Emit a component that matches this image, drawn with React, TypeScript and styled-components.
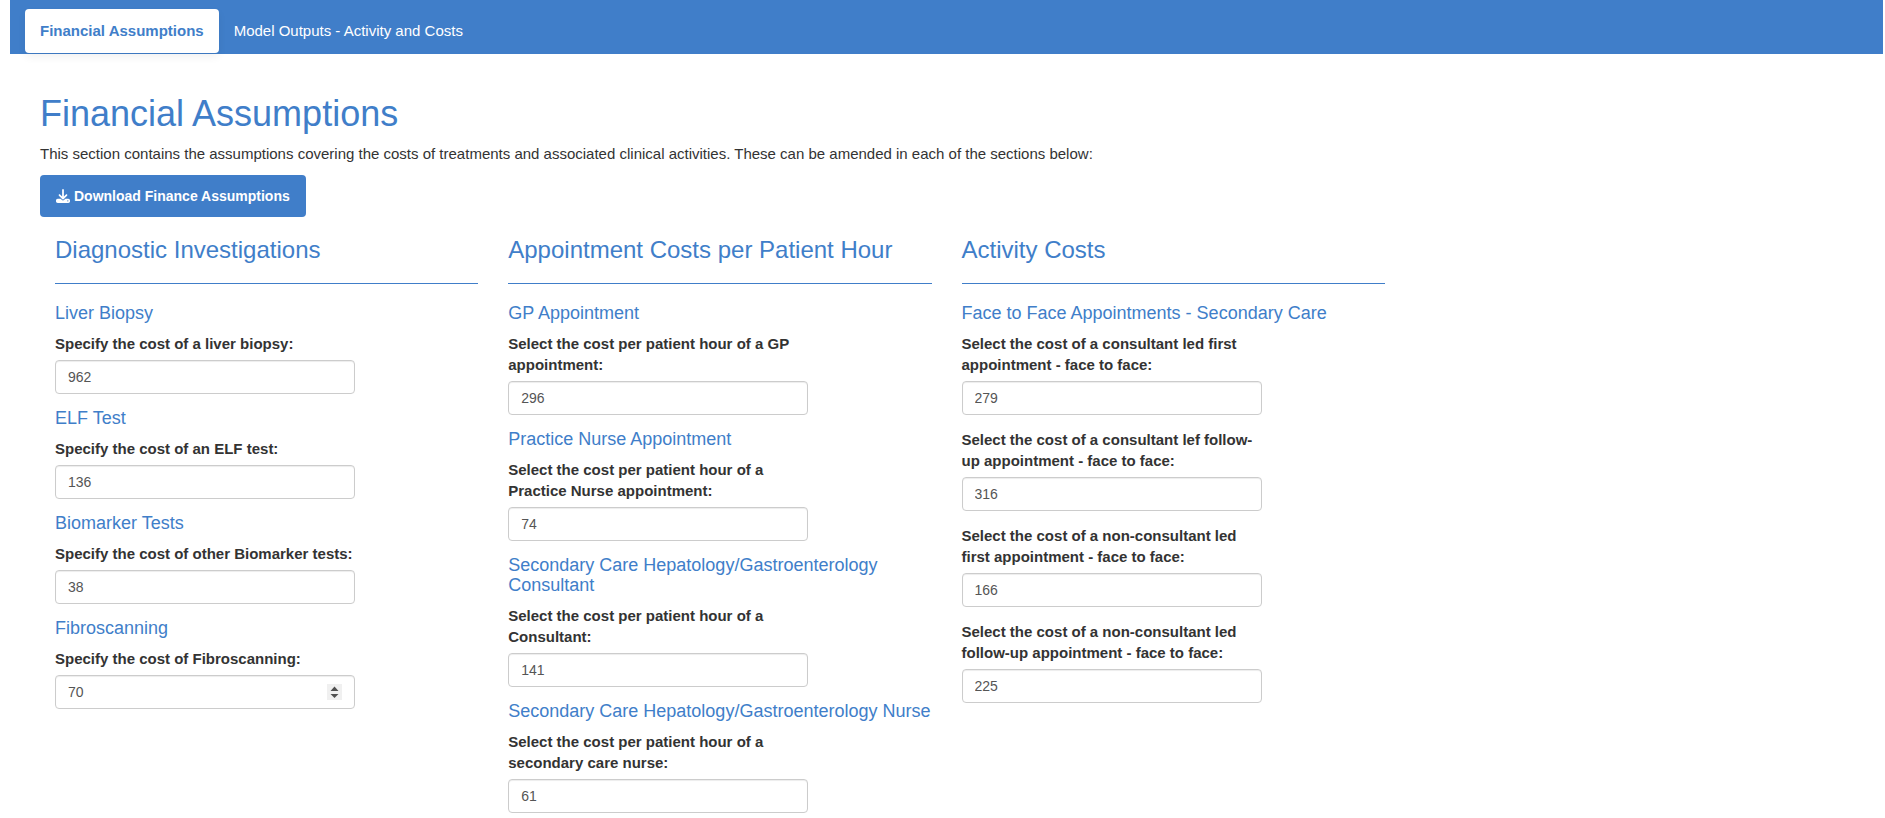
import React, { useId, useState } from 'react';
import styled, { createGlobalStyle } from 'styled-components';
import { FaDownload } from 'react-icons/fa6';

const blue = '#407ec9';

const spinnerArrows =
  "data:image/svg+xml,%3Csvg xmlns='http://www.w3.org/2000/svg' width='15' height='16'%3E%3Cpath fill='%23505050' d='M7.500 2.500L11.500 7H3.500zM7.500 14L3.500 10H11.500z'/%3E%3C/svg%3E";

const GlobalStyle = createGlobalStyle`
  * { box-sizing: border-box; }
  body {
    margin: 0;
    background: #fff;
    color: #333;
    font-family: 'Liberation Sans', Arial, sans-serif;
    font-size: 15px;
    line-height: 21px;
  }
`;

const Page = styled.div`
  padding: 0 2px 0 10px;
`;

const TabBar = styled.nav`
  display: flex;
  height: 54px;
  padding: 9px 15px 1px;
  background: ${blue};
`;

const Tab = styled.a<{ $active?: boolean }>`
  display: flex;
  align-items: center;
  padding: 0 15px 2px;
  border-radius: 4px;
  text-decoration: none;
  font-weight: ${(p) => (p.$active ? 700 : 400)};
  color: ${(p) => (p.$active ? blue : '#fff')};
  background: ${(p) => (p.$active ? '#fff' : 'transparent')};
  box-shadow: ${(p) => (p.$active ? '0 4px 8px rgba(0, 0, 0, 0.06)' : 'none')};
`;

const Content = styled.main`
  padding: 40px 30px 0;
`;

const PageTitle = styled.h1`
  margin: 0 0 9px;
  color: ${blue};
  font-size: 36px;
  font-weight: 400;
  line-height: 40px;
`;

const Intro = styled.p`
  margin: 0 0 11px;
`;

const DownloadButton = styled.button`
  display: flex;
  align-items: center;
  gap: 4px;
  height: 42px;
  padding: 0 16px;
  border: 0;
  border-radius: 4px;
  background: ${blue};
  color: #fff;
  font-family: inherit;
  font-size: 14px;
  font-weight: 700;
  cursor: pointer;
`;

const Columns = styled.div`
  display: grid;
  grid-template-columns: repeat(3, 25%);
`;

const Column = styled.section`
  padding: 0 15px;
`;

const ColumnTitle = styled.h3`
  margin: 20px 0 19px;
  padding-bottom: 20px;
  border-bottom: 1px solid ${blue};
  color: ${blue};
  font-size: 24px;
  font-weight: 400;
  line-height: 26px;
`;

const GroupTitle = styled.h4`
  margin: 10px 0;
  color: ${blue};
  font-size: 18px;
  font-weight: 400;
  line-height: 20px;
`;

const Field = styled.div`
  width: 300px;
  max-width: 100%;
  margin-bottom: 14px;
`;

const Label = styled.label`
  display: block;
  margin-bottom: 6px;
  font-weight: 700;
`;

const NumberInput = styled.input<{ $spinner?: boolean }>`
  display: block;
  width: 100%;
  height: 34px;
  padding: 6px 12px;
  border: 1px solid #ccc;
  border-radius: 4px;
  background: #fff;
  box-shadow: inset 0 1px 1px rgba(0, 0, 0, 0.075);
  color: #555;
  font-family: inherit;
  font-size: 14px;

  &::-webkit-inner-spin-button {
    appearance: none;
    width: 15px;
    height: 16px;
    background: #f0f0f0 url("${spinnerArrows}") no-repeat;
    opacity: ${(p) => (p.$spinner ? 1 : 0)};
  }

  &:hover::-webkit-inner-spin-button {
    opacity: 1;
  }
`;

type FieldData = { label: string; value: number; spinner?: boolean };
type Group = { title: string; fields: FieldData[] };

const columns: { title: string; groups: Group[] }[] = [
  {
    title: 'Diagnostic Investigations',
    groups: [
      { title: 'Liver Biopsy', fields: [{ label: 'Specify the cost of a liver biopsy:', value: 962 }] },
      { title: 'ELF Test', fields: [{ label: 'Specify the cost of an ELF test:', value: 136 }] },
      { title: 'Biomarker Tests', fields: [{ label: 'Specify the cost of other Biomarker tests:', value: 38 }] },
      { title: 'Fibroscanning', fields: [{ label: 'Specify the cost of Fibroscanning:', value: 70, spinner: true }] },
    ],
  },
  {
    title: 'Appointment Costs per Patient Hour',
    groups: [
      { title: 'GP Appointment', fields: [{ label: 'Select the cost per patient hour of a GP appointment:', value: 296 }] },
      { title: 'Practice Nurse Appointment', fields: [{ label: 'Select the cost per patient hour of a Practice Nurse appointment:', value: 74 }] },
      { title: 'Secondary Care Hepatology/Gastroenterology Consultant', fields: [{ label: 'Select the cost per patient hour of a Consultant:', value: 141 }] },
      { title: 'Secondary Care Hepatology/Gastroenterology Nurse', fields: [{ label: 'Select the cost per patient hour of a secondary care nurse:', value: 61 }] },
    ],
  },
  {
    title: 'Activity Costs',
    groups: [
      {
        title: 'Face to Face Appointments - Secondary Care',
        fields: [
          { label: 'Select the cost of a consultant led first appointment - face to face:', value: 279 },
          { label: 'Select the cost of a consultant lef follow-up appointment - face to face:', value: 316 },
          { label: 'Select the cost of a non-consultant led first appointment - face to face:', value: 166 },
          { label: 'Select the cost of a non-consultant led follow-up appointment - face to face:', value: 225 },
        ],
      },
    ],
  },
];

function CostField({ label, value, spinner }: FieldData) {
  const id = useId();
  const [current, setCurrent] = useState(String(value));
  return (
    <Field>
      <Label htmlFor={id}>{label}</Label>
      <NumberInput
        id={id}
        type="number"
        value={current}
        $spinner={spinner}
        onChange={(e) => setCurrent(e.target.value)}
      />
    </Field>
  );
}

export default function App() {
  return (
    <>
      <GlobalStyle />
      <Page>
        <TabBar>
          <Tab href="#assumptions" $active aria-current="page">Financial Assumptions</Tab>
          <Tab href="#outputs">Model Outputs - Activity and Costs</Tab>
        </TabBar>
        <Content>
          <PageTitle>Financial Assumptions</PageTitle>
          <Intro>
            This section contains the assumptions covering the costs of treatments and associated
            clinical activities. These can be amended in each of the sections below:
          </Intro>
          <DownloadButton type="button">
            <FaDownload size={14} aria-hidden />
            Download Finance Assumptions
          </DownloadButton>
          <Columns>
            {columns.map((column) => (
              <Column key={column.title}>
                <ColumnTitle>{column.title}</ColumnTitle>
                {column.groups.map((group) => (
                  <React.Fragment key={group.title}>
                    <GroupTitle>{group.title}</GroupTitle>
                    {group.fields.map((field) => (
                      <CostField key={field.label} {...field} />
                    ))}
                  </React.Fragment>
                ))}
              </Column>
            ))}
          </Columns>
        </Content>
      </Page>
    </>
  );
}
